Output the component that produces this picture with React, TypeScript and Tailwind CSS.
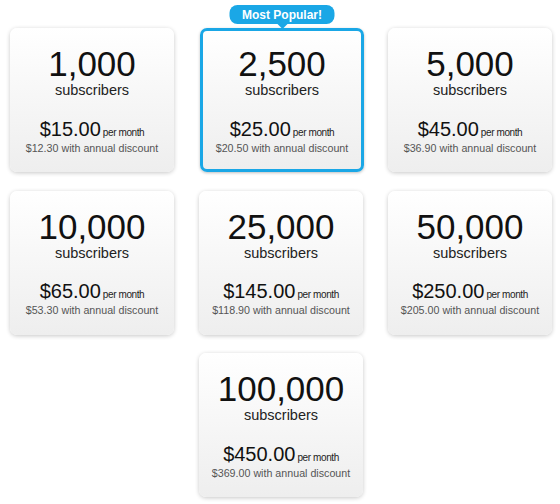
import React from 'react';

interface Plan {
  count: string;
  price: string;
  annual: string;
  featured?: boolean;
}

const plans: Plan[] = [
  { count: '1,000', price: '$15.00', annual: '$12.30' },
  { count: '2,500', price: '$25.00', annual: '$20.50', featured: true },
  { count: '5,000', price: '$45.00', annual: '$36.90' },
  { count: '10,000', price: '$65.00', annual: '$53.30' },
  { count: '25,000', price: '$145.00', annual: '$118.90' },
  { count: '50,000', price: '$250.00', annual: '$205.00' },
  { count: '100,000', price: '$450.00', annual: '$369.00' },
];

function PlanCard({ plan }: { plan: Plan }) {
  return (
    <div
      className={`relative h-[144px] w-[164px] rounded-[7px] bg-gradient-to-b from-white to-[#eeeeee] text-center ${
        plan.featured
          ? 'border-[3px] border-[#1aa7e6] shadow-[0_1px_3px_rgba(0,0,0,0.25)] h-[142px] ml-[1px] w-[163px]'
          : 'shadow-[0_1px_4px_rgba(0,0,0,0.22)]'
      }`}
    >
      {plan.featured && (
        <div className="absolute -top-[26px] left-1/2 -translate-x-1/2">
          <div className="flex h-[19px] w-[105px] items-center justify-center rounded-[8px] bg-[#1aa7e6] text-[12px] font-bold leading-none text-white">
            Most Popular!
          </div>
          <div className="mx-auto h-0 w-0 border-l-[5px] border-r-[5px] border-t-[5px] border-l-transparent border-r-transparent border-t-[#1aa7e6]" />
        </div>
      )}
      <div className={`flex flex-col items-center ${plan.featured ? 'pt-[15px]' : 'pt-[18px]'}`}>
        <div className="text-[35px] leading-none text-[#111]">{plan.count}</div>
        <div className="mt-[2px] text-[14.5px] leading-none text-[#222]">subscribers</div>
        <div className="mt-[21px] flex items-baseline justify-center leading-none">
          <span className="text-[20px] text-[#111]">{plan.price}</span>
          <span className="ml-[2px] text-[10px] tracking-[-0.4px] text-[#222]">per month</span>
        </div>
        <div className="mt-[4px] text-[10.7px] leading-none text-[#555]">
          {plan.annual} with annual discount
        </div>
      </div>
    </div>
  );
}

export default function App() {
  return (
    <div className="h-[504px] w-[560px] bg-white pl-[10px] pt-[28px] font-['Liberation_Sans',Arial,sans-serif]">
      <div className="grid grid-cols-[164px_164px_164px] gap-x-[25px] gap-y-[18.5px]">
        {plans.map((plan, key) => (
          <div key={key} className={key === 6 ? 'col-start-2' : ''}>
            <PlanCard plan={plan} />
          </div>
        ))}
      </div>
    </div>
  );
}
